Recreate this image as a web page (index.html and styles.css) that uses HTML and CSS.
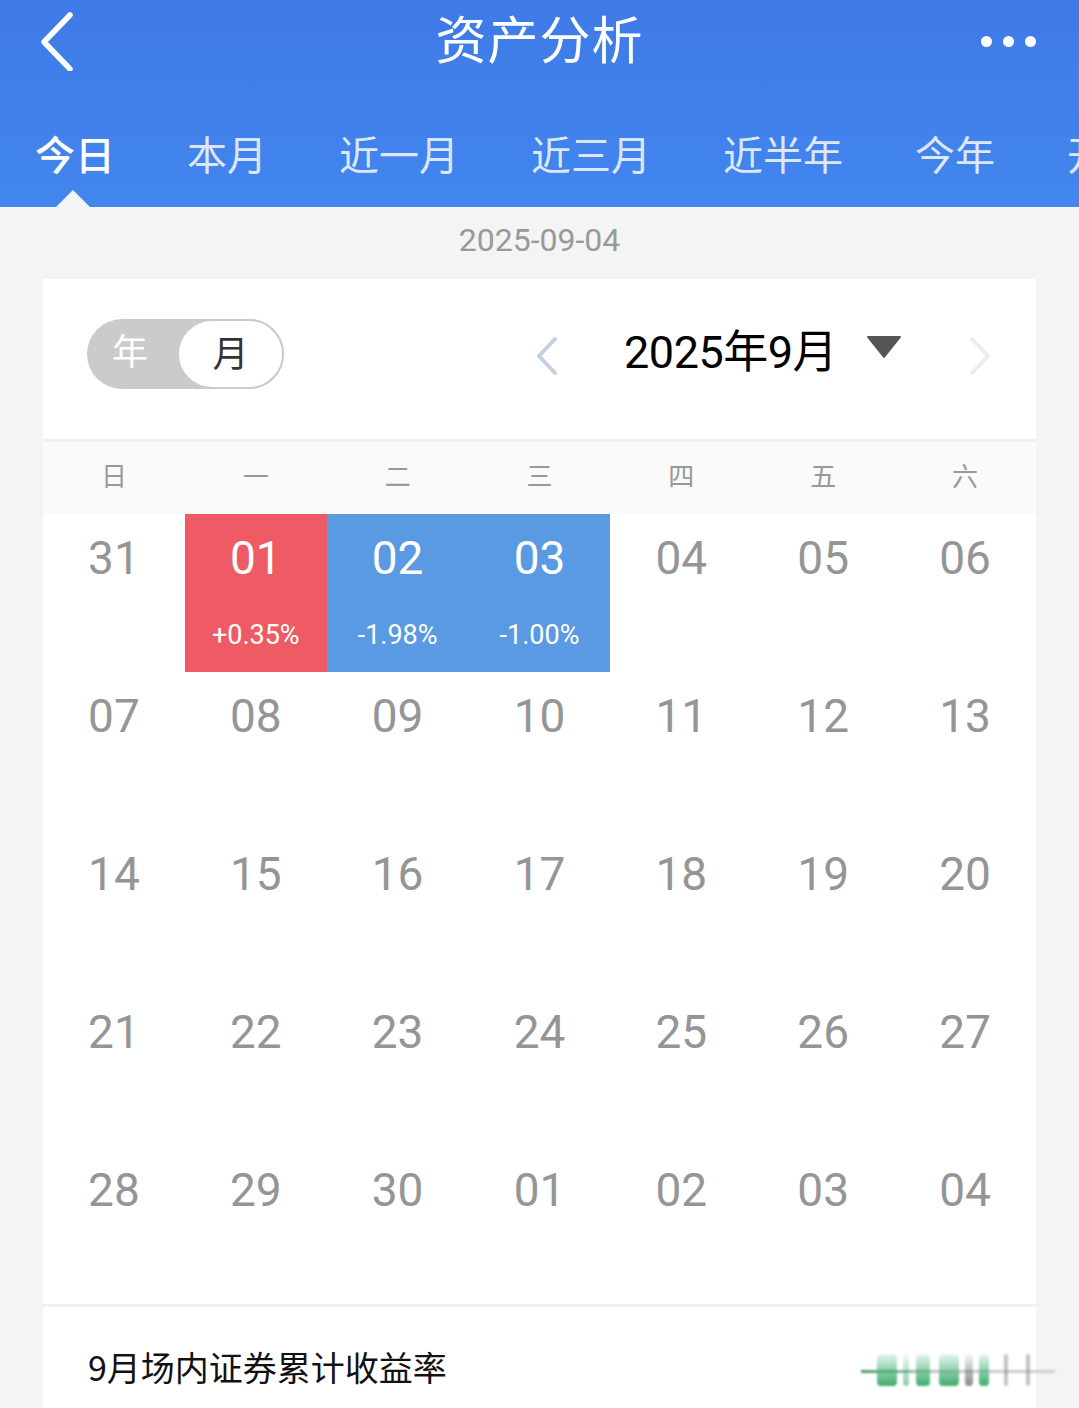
FILE: index.html
```html
<!DOCTYPE html>
<html lang="zh-CN">
<head>
<meta charset="utf-8">
<title>资产分析</title>
<link rel="stylesheet" href="styles.css">
</head>
<body>
<div class="page">
  <header class="header">
    <div class="topbar">
      <svg class="back" width="40" height="60" viewBox="0 0 40 60"><polyline points="32,4 6,31 32,58" fill="none" stroke="#fff" stroke-width="5.5" stroke-linecap="round" stroke-linejoin="round"/></svg>
      <h1 class="title">资产分析</h1>
      <div class="more"><span></span><span></span><span></span></div>
    </div>
    <nav class="tabs">
      <div class="tab active">今日<i class="caret"></i></div>
      <div class="tab">本月</div>
      <div class="tab">近一月</div>
      <div class="tab">近三月</div>
      <div class="tab">近半年</div>
      <div class="tab">今年</div>
      <div class="tab">开户以来</div>
    </nav>
  </header>

  <div class="date">2025-09-04</div>

  <section class="card">
    <div class="card-top">
      <div class="toggle">
        <span class="opt">年</span>
        <span class="knob">月</span>
      </div>
      <div class="monthnav">
        <svg class="chev prev" width="26" height="40" viewBox="0 0 26 40"><polyline points="21,3 5,20 21,37" fill="none" stroke="#c3d0e0" stroke-width="4" stroke-linecap="round" stroke-linejoin="round"/></svg>
        <span class="month">2025年9月</span>
        <svg class="drop" width="34" height="24" viewBox="0 0 34 24"><polygon points="1,2 33,2 17,22" fill="#555" stroke="#555" stroke-width="2" stroke-linejoin="round"/></svg>
        <svg class="chev next" width="26" height="40" viewBox="0 0 26 40"><polyline points="5,3 21,20 5,37" fill="none" stroke="#ececec" stroke-width="4" stroke-linecap="round" stroke-linejoin="round"/></svg>
      </div>
    </div>
    <div class="weekdays">
      <span>日</span><span>一</span><span>二</span><span>三</span><span>四</span><span>五</span><span>六</span>
    </div>
    <div class="grid">
      <div class="day"><b>31</b></div>
      <div class="day up"><b>01</b><em>+0.35%</em></div>
      <div class="day down"><b>02</b><em>-1.98%</em></div>
      <div class="day down"><b>03</b><em>-1.00%</em></div>
      <div class="day"><b>04</b></div>
      <div class="day"><b>05</b></div>
      <div class="day"><b>06</b></div>

      <div class="day"><b>07</b></div>
      <div class="day"><b>08</b></div>
      <div class="day"><b>09</b></div>
      <div class="day"><b>10</b></div>
      <div class="day"><b>11</b></div>
      <div class="day"><b>12</b></div>
      <div class="day"><b>13</b></div>

      <div class="day"><b>14</b></div>
      <div class="day"><b>15</b></div>
      <div class="day"><b>16</b></div>
      <div class="day"><b>17</b></div>
      <div class="day"><b>18</b></div>
      <div class="day"><b>19</b></div>
      <div class="day"><b>20</b></div>

      <div class="day"><b>21</b></div>
      <div class="day"><b>22</b></div>
      <div class="day"><b>23</b></div>
      <div class="day"><b>24</b></div>
      <div class="day"><b>25</b></div>
      <div class="day"><b>26</b></div>
      <div class="day"><b>27</b></div>

      <div class="day"><b>28</b></div>
      <div class="day"><b>29</b></div>
      <div class="day"><b>30</b></div>
      <div class="day"><b>01</b></div>
      <div class="day"><b>02</b></div>
      <div class="day"><b>03</b></div>
      <div class="day"><b>04</b></div>
    </div>
    <div class="summary">
      <span class="label">9月场内证券累计收益率</span>
      <div class="mosaic">
        <i class="line"></i>
        <i class="bar b1"></i><i class="bar b2"></i><i class="bar b3"></i><i class="bar b4"></i><i class="bar b5"></i><i class="bar b6"></i><i class="bar b7"></i><i class="bar b8"></i>
      </div>
    </div>
  </section>
</div>
</body>
</html>
```

FILE: styles.css
```css
* { box-sizing: border-box; margin: 0; padding: 0; }
html, body { background: #f4f4f4; }
body {
  width: 1079px;
  height: 1408px;
  overflow: hidden;
  font-family: Roboto, "Noto Sans CJK SC", sans-serif;
}
.page { width: 1079px; }

.header {
  height: 207px;
  background: linear-gradient(180deg, #3f7ae7 0%, #4286ee 100%);
  color: #fff;
}
.topbar {
  height: 84px;
  display: flex;
  align-items: center;
  position: relative;
  padding: 0 40px;
}
.back { position: absolute; left: 38px; top: 11px; }
.title {
  flex: 1;
  text-align: center;
  font-family: "Noto Sans CJK SC", sans-serif;
  font-weight: 400;
  font-size: 51px;
  line-height: 80px;
  letter-spacing: 1px;
  margin-top: -10px;
}
.more {
  position: absolute;
  right: 43px;
  top: 36px;
  display: flex;
  gap: 11px;
}
.more span {
  width: 11px;
  height: 11px;
  border-radius: 50%;
  background: #fff;
}

.tabs {
  height: 123px;
  padding: 14px 0 0 35px;
  display: flex;
  gap: 72px;
  white-space: nowrap;
  overflow: hidden;
  font-family: "Noto Sans CJK SC", sans-serif;
  font-size: 40px;
}
.tab {
  position: relative;
  display: flex;
  align-items: center;
  color: rgba(255,255,255,0.82);
  flex-shrink: 0;
}
.tab.active { color: #fff; font-weight: 500; }
.caret {
  position: absolute;
  bottom: 0;
  left: 50%;
  margin-left: -19px;
  width: 0;
  height: 0;
  border-left: 17px solid transparent;
  border-right: 17px solid transparent;
  border-bottom: 17px solid #f4f4f4;
}

.date {
  height: 72px;
  line-height: 66px;
  text-align: center;
  color: #999;
  font-size: 32px;
}

.card {
  margin: 0 43px;
  background: #fff;
}
.card-top {
  height: 160px;
  display: flex;
  align-items: center;
  padding: 0 43px 10px 44px;
}
.toggle {
  width: 197px;
  height: 70px;
  border-radius: 35px;
  background: #cbcbcb;
  display: flex;
  align-items: stretch;
  font-family: "Noto Sans CJK SC", sans-serif;
  font-size: 36px;
}
.toggle .opt {
  width: 90px;
  display: flex;
  align-items: center;
  justify-content: center;
  color: #fff;
  padding-bottom: 10px;
  padding-right: 4px;
}
.toggle .knob {
  flex: 1;
  background: #fff;
  border: 2px solid #cbcbcb;
  border-radius: 35px;
  display: flex;
  align-items: center;
  justify-content: center;
  color: #333;
  padding-bottom: 6px;
}
.monthnav {
  margin-left: auto;
  display: flex;
  align-items: center;
}
.chev.prev { margin-right: 64px; margin-top: 4px; }
.month {
  font-size: 45px;
  color: #000;
  letter-spacing: -0.5px;
  padding-bottom: 12px;
}
.drop { margin-left: 30px; margin-top: -14px; }
.chev.next { margin-left: 66px; margin-top: 4px; }

.weekdays {
  border-top: 3px solid #f1f1f1;
  height: 75px;
  background: #fafafa;
  display: grid;
  grid-template-columns: repeat(7, 1fr);
  align-items: center;
  font-family: "Noto Sans CJK SC", sans-serif;
  font-size: 26px;
  color: #999;
}
.weekdays span { text-align: center; padding-bottom: 8px; }

.grid {
  display: grid;
  grid-template-columns: repeat(7, 1fr);
  grid-auto-rows: 158px;
}
.day {
  display: flex;
  flex-direction: column;
  align-items: center;
  color: #959595;
}
.day b {
  font-weight: 400;
  font-size: 46px;
  line-height: 56px;
  padding-top: 16px;
}
.day em {
  font-style: normal;
  font-size: 27px;
  line-height: 30px;
  margin-top: 34px;
}
.day.up { background: #ee5b64; color: #fff; }
.day.down { background: #5a9ae3; color: #fff; }

.summary {
  border-top: 3px solid #f1f1f1;
  height: 130px;
  display: flex;
  align-items: flex-start;
  padding: 35px 0 0 45px;
}
.label {
  font-family: "Noto Sans CJK SC", sans-serif;
  font-size: 34px;
  color: #111;
  line-height: 50px;
}
.mosaic {
  margin-left: auto;
  margin-right: -19px;
  margin-top: 4px;
  width: 194px;
  height: 50px;
  position: relative;
  filter: blur(1.2px);
}
.mosaic .line {
  position: absolute;
  left: 0;
  right: 0;
  top: 24px;
  height: 3px;
  background: linear-gradient(90deg, #4a9a6c 0%, #c8c8c8 40%, #d0d0d0 100%);
}
.mosaic .bar {
  position: absolute;
  top: 8px;
  height: 32px;
  background: linear-gradient(180deg, rgba(90,200,140,0.15) 0%, #3dab6e 100%);
  border-radius: 4px;
}
.mosaic .b1 { left: 16px; width: 20px; }
.mosaic .b2 { left: 42px; width: 6px; opacity: 0.6; }
.mosaic .b3 { left: 55px; width: 14px; }
.mosaic .b4 { left: 78px; width: 20px; }
.mosaic .b5 { left: 104px; width: 8px; background: linear-gradient(180deg, rgba(90,200,140,0.1) 0%, #555 100%); opacity: 0.7; }
.mosaic .b6 { left: 118px; width: 10px; }
.mosaic .b7 { left: 143px; width: 4px; background: #888; opacity: 0.5; }
.mosaic .b8 { left: 165px; width: 4px; background: #888; opacity: 0.5; }
```
